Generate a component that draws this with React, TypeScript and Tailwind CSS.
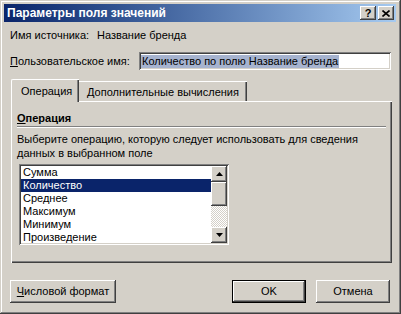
const raised =
  "bg-[#d4d0c8] shadow-[inset_-1px_-1px_#404040,inset_1px_1px_#ffffff,inset_-2px_-2px_#808080,inset_2px_2px_#d4d0c8]";
const sunken =
  "shadow-[inset_1px_1px_#808080,inset_-1px_-1px_#ffffff,inset_2px_2px_#404040,inset_-2px_-2px_#d4d0c8]";

function Arrow({ down }: { down?: boolean }) {
  return (
    <svg width="7" height="4" viewBox="0 0 7 4">
      {down ? <polygon points="0,0 7,0 3.5,4" fill="#000" /> : <polygon points="3.5,0 7,4 0,4" fill="#000" />}
    </svg>
  );
}

const items = ["Сумма", "Количество", "Среднее", "Максимум", "Минимум", "Произведение"];

export default function App() {
  return (
    <div className="w-[401px] h-[314px] bg-[#d4d0c8] pt-[4px] pl-[4px] pr-[5px] flex flex-col text-[11px] leading-[13px] text-black font-['Liberation_Sans',Tahoma,sans-serif] shadow-[inset_-1px_-1px_#404040,inset_1px_1px_#d4d0c8,inset_-2px_-2px_#808080,inset_2px_2px_#ffffff]">
      {/* title bar */}
      <div className="h-[18px] flex items-center bg-linear-to-r from-[#0a246a] to-[#a6caf0]">
        <span className="pl-[3px] text-white font-bold text-[12px]">Параметры поля значений</span>
        <div className="ml-auto mr-[2px] flex gap-[2px]">
          <div className={`w-[16px] h-[14px] flex items-center justify-center font-bold text-[11px] leading-none ${raised}`}>?</div>
          <div className={`w-[16px] h-[14px] flex items-center justify-center ${raised}`}>
            <svg width="8" height="7" viewBox="0 0 8 7">
              <path d="M0.5 0.5 L7.5 6.5 M7.5 0.5 L0.5 6.5" stroke="#000" strokeWidth="1.6" />
            </svg>
          </div>
        </div>
      </div>

      <div className="pl-[6px] flex flex-col">
        <div className="mt-[7px] h-[13px] flex items-center">
          <span className="w-[87px]">Имя источника:</span>
          <span>Название бренда</span>
        </div>

        <div className="mt-[10px] h-[18px] flex items-center">
          <span className="w-[129px]">
            <span className="underline">П</span>ользовательское имя:
          </span>
          <div className={`w-[252px] h-[18px] bg-white flex items-center pl-[2px] ${sunken}`}>
            <span className="bg-[#a6b3cf] px-px">Количество по полю Название бренда</span>
          </div>
        </div>

        {/* tabs */}
        <div className="mt-[9px] ml-[1px] flex items-end h-[22px]">
          <div className="relative z-10 w-[68px] h-[23px] -mb-px bg-[#d4d0c8] border-t border-l border-white rounded-tl-[2px] shadow-[inset_-1px_0_#404040,inset_-2px_0_#808080] pl-[9px] pt-[5px]">
            Операция
          </div>
          <div className="w-[168px] h-[20px] border-t border-white shadow-[inset_-1px_0_#404040,inset_-2px_0_#808080] pl-[8px] pt-[4px]">
            Дополнительные вычисления
          </div>
        </div>

        <div className="ml-[1px] w-[381px] h-[162px] border-t border-l border-white shadow-[inset_-1px_-1px_#404040,inset_-2px_-2px_#808080] pl-[5px] flex flex-col">
          <div className="mt-[10px] font-bold">
            <span className="underline">О</span>перация
          </div>
          <div className="mt-[1px] w-[369px] border-t border-[#808080] border-b border-b-white" />
          <div className="mt-[4px] leading-[14px] whitespace-nowrap">
            Выберите операцию, которую следует использовать для сведения
            <br />
            данных в выбранном поле
          </div>

          <div className={`mt-[4px] ml-[2px] w-[210px] h-[81px] bg-white p-[2px] flex ${sunken}`}>
            <div className="flex-1 overflow-hidden">
              {items.map((it, i) => (
                <div
                  key={it}
                  className={`h-[13px] pl-[2px] leading-[13px] ${i === 1 ? "bg-[#0a246a] text-white" : ""}`}
                >
                  {it}
                </div>
              ))}
            </div>
            <div className="w-[16px] flex flex-col">
              <div className={`h-[16px] flex items-center justify-center ${raised}`}>
                <Arrow />
              </div>
              <div className={`h-[24px] ${raised}`} />
              <div className="flex-1 bg-[repeating-conic-gradient(#d4d0c8_0_25%,#ffffff_0_50%)] bg-size-[2px_2px]" />
              <div className={`h-[16px] flex items-center justify-center ${raised}`}>
                <Arrow down />
              </div>
            </div>
          </div>
        </div>

        {/* bottom buttons */}
        <div className="mt-[17px] mr-[6px] flex">
          <div className={`w-[106px] h-[23px] flex items-center justify-center ${raised}`}>
            <span>
              <span className="underline">Ч</span>исловой формат
            </span>
          </div>
          <div className="ml-auto w-[74px] h-[23px] border border-black">
            <div className={`w-full h-full flex items-center justify-center ${raised}`}>OK</div>
          </div>
          <div className={`ml-[10px] w-[74px] h-[23px] flex items-center justify-center ${raised}`}>Отмена</div>
        </div>
      </div>
    </div>
  );
}
